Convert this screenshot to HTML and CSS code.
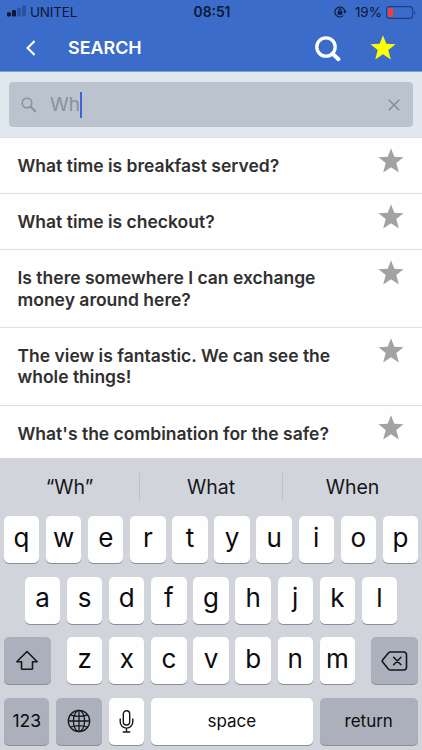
FILE: index.html
```html
<!DOCTYPE html>
<html lang="en">
<head>
<meta charset="utf-8">
<meta name="viewport" content="width=device-width, initial-scale=1">
<title>Search</title>
<link rel="stylesheet" href="styles.css">
</head>
<body>
<svg width="0" height="0" class="defs">
	<symbol id="star" viewBox="0 0 26 25"><path d="M13 .3l3.3 8.4 9.2.5-7.2 5.8 2.5 9.4L13 19.3l-7.8 5.1L7.700 15 .5 9.200l9.200-.5z"/></symbol>
</svg>
<div class="phone">
	<header class="header">
		<div class="status">
			<div class="status-left">
				<svg class="signal" width="19" height="12" viewBox="0 0 19 12">
					<rect x="0" y="7.200" width="4" height="4.300" rx="1"/>
					<rect x="5" y="5" width="4" height="6.500" rx="1"/>
					<rect x="10" y="2.800" width="4" height="8.700" rx="1" opacity=".3"/>
					<rect x="15" y=".6" width="4" height="10.900" rx="1" opacity=".3"/>
				</svg>
				<span class="carrier">UNITEL</span>
			</div>
			<div class="clock">08:51</div>
			<div class="status-right">
				<svg class="lock" width="13" height="12" viewBox="0 0 13 12" fill="none" stroke="#0b1838" stroke-width="1.100">
					<path d="M10.900 5.500A5 5 0 1 0 9.300 9.700"/>
					<path d="M9 5h3.800l-1.900 2.500z" fill="#0b1838" stroke="none"/>
					<rect x="3.700" y="5.300" width="4.600" height="3.400" fill="#0b1838" stroke="none"/>
					<path d="M4.700 5.500V4.200a1.300 1.300 0 0 1 2.600 0v1.300"/>
				</svg>
				<span class="percent">19%</span>
				<svg class="battery" width="30" height="13" viewBox="0 0 30 13">
					<rect x=".6" y=".6" width="26" height="11.800" rx="3" fill="none" stroke="#1f3f84" stroke-width="1.100"/>
					<rect x="2" y="2.200" width="5" height="8.600" rx="1" fill="#fb3b36"/>
					<path d="M28 4.300c1.700.7 1.700 3.700 0 4.400z" fill="#1f3f84"/>
				</svg>
			</div>
		</div>
		<div class="nav">
			<svg class="back" width="10" height="16" viewBox="0 0 10 16"><path d="M8.600 1L1.600 8l7 7" fill="none" stroke="#fff" stroke-width="2.100"/></svg>
			<h1 class="title">SEARCH</h1>
			<svg class="find" width="26" height="26" viewBox="0 0 26 26" fill="none" stroke="#fff"><circle cx="11" cy="11" r="9.200" stroke-width="3.300"/><path d="M17.600 17.600l5.800 5.600" stroke-width="4" stroke-linecap="round"/></svg>
			<svg class="fav" width="26" height="25"><use href="#star"/></svg>
		</div>
	</header>

	<div class="search">
		<div class="search-box">
			<svg class="glass" width="16" height="16" viewBox="0 0 16 16" fill="none" stroke="#89919b"><circle cx="6" cy="6" r="4.800" stroke-width="1.600"/><path d="M9.600 9.600l5.100 5.100" stroke-width="2"/></svg>
			<span class="query">Wh</span><span class="caret"></span>
			<svg class="clear" width="12" height="12" viewBox="0 0 12 12"><path d="M.7.7l10.600 10.600M11.300.7L.7 11.300" stroke="#858d97" stroke-width="1.500"/></svg>
		</div>
	</div>

	<ul class="list">
		<li class="item"><p>What time is breakfast served?</p><svg class="star" width="26" height="25"><use href="#star"/></svg></li>
		<li class="item"><p>What time is checkout?</p><svg class="star" width="26" height="25"><use href="#star"/></svg></li>
		<li class="item"><p>Is there somewhere I can exchange<br>money around here?</p><svg class="star" width="26" height="25"><use href="#star"/></svg></li>
		<li class="item"><p>The view is fantastic. We can see the<br>whole things!</p><svg class="star" width="26" height="25"><use href="#star"/></svg></li>
		<li class="item"><p>What's the combination for the safe?</p><svg class="star" width="26" height="25"><use href="#star"/></svg></li>
	</ul>

	<div class="keyboard">
		<div class="suggest">
			<span class="word">“Wh”</span>
			<span class="word">What</span>
			<span class="word">When</span>
		</div>
		<div class="keys">
			<div class="row">
				<b class="key">q</b><b class="key">w</b><b class="key">e</b><b class="key">r</b><b class="key">t</b><b class="key">y</b><b class="key">u</b><b class="key">i</b><b class="key">o</b><b class="key">p</b>
			</div>
			<div class="row">
				<b class="key">a</b><b class="key">s</b><b class="key">d</b><b class="key">f</b><b class="key">g</b><b class="key">h</b><b class="key">j</b><b class="key">k</b><b class="key">l</b>
			</div>
			<div class="row row-third">
				<b class="key dark shift"><svg width="24" height="21" viewBox="0 0 24 21"><path d="M12 1.500L1.800 11.700h4.700v6.800q0 .8.800.8h9.400q.8 0 .8-.8v-6.800h4.700z" fill="none" stroke="#15171b" stroke-width="1.600" stroke-linejoin="round"/></svg></b>
				<div class="row">
					<b class="key">z</b><b class="key">x</b><b class="key">c</b><b class="key">v</b><b class="key">b</b><b class="key">n</b><b class="key">m</b>
				</div>
				<b class="key dark shift"><svg width="27" height="20" viewBox="0 0 27 20" fill="none" stroke="#15171b" stroke-width="1.600" stroke-linejoin="round" stroke-linecap="round"><path d="M9.300 1h13.200q3 0 3 3v12q0 3-3 3H9.300q-1 0-1.700-.8L1.600 11q-.8-1 0-2l6-7.200Q8.300 1 9.300 1z"/><path d="M12.700 6.300l7.200 7.400M19.900 6.300l-7.200 7.400"/></svg></b>
			</div>
			<div class="row">
				<b class="key dark small num">123</b>
				<b class="key dark globe"><svg width="24" height="24" viewBox="0 0 24 24" fill="none" stroke="#15171b" stroke-width="1.300"><circle cx="12" cy="12" r="10.700"/><ellipse cx="12" cy="12" rx="5.600" ry="10.700"/><path d="M12 1.300v21.400M1.300 12h21.400M3.300 5.900q8.700 3 17.400 0M3.300 18.100q8.700-3 17.400 0"/></svg></b>
				<b class="key mic"><svg width="15" height="23" viewBox="0 0 15 23" fill="none" stroke="#15171b" stroke-width="1.400"><rect x="4.300" y=".8" width="6.400" height="14.200" rx="3.200"/><path d="M1.200 8.500v3.300a6.300 6.300 0 0 0 12.600 0V8.500M7.500 18v4M3.700 22h7.600"/></svg></b>
				<b class="key small space">space</b>
				<b class="key dark small return">return</b>
			</div>
		</div>
	</div>
</div>
</body>
</html>
```

FILE: styles.css
```css
*{box-sizing:border-box;}
body{margin:0;padding:0;background:#fefefe;font-family:Inter,"Liberation Sans",sans-serif;}
svg{display:block;flex:none;}
.defs{display:none;}
.phone{width:422px;height:750px;overflow:hidden;display:flex;flex-direction:column;}

.header{height:72px;background:#3c6cc9;border-bottom:1px solid #7f9fda;flex:none;}
.status{height:24px;display:grid;grid-template-columns:1fr auto 1fr;align-items:center;color:#0b1838;font-size:13.5px;line-height:24px;}
.status-left{display:flex;padding-left:7px;}
.signal{margin:5px 4px 0 0;fill:#0b1838;}
.carrier{letter-spacing:-.2px;}
.clock{padding-left:2px;font-weight:600;font-size:13.800px;}
.status-right{display:flex;align-items:center;justify-content:flex-end;padding-right:6px;}
.lock{margin-right:8px;}
.percent{margin-right:4px;}
.nav{height:47px;display:flex;align-items:center;padding:0 26px;}
.back{margin-top:1px;}
.title{margin:0 auto 0 32px;font-size:17.900px;font-weight:600;line-height:24px;color:#fff;}
.find{margin:2px 29px 0 0;}
.fav{margin-top:-1px;fill:#ff0;}

.search{height:65px;padding:10px 9px;background:#e1e8f0;flex:none;}
.search-box{height:45px;display:flex;align-items:center;padding:0 13px 0 12px;background:#bbc3cf;border-radius:4px;}
.query{margin-left:13px;font-size:19px;color:#89919c;}
.caret{width:2px;height:26px;background:#4263d8;}
.clear{margin-left:auto;}

.list{margin:0;padding:0;list-style:none;height:321px;overflow:hidden;flex:none;}
.item{display:flex;justify-content:space-between;align-items:flex-start;padding:17px 18px 16.800px 17.500px;border-top:1px solid #dedede;color:#303030;}
.item p{margin:0;font-size:17.500px;font-weight:600;line-height:21.400px;white-space:nowrap;}
.star{margin:-7.300px 0 -10px;fill:#a2a2a2;}

.keyboard{flex:1;background:#d1d4db;}
.suggest{height:58px;display:grid;grid-template-columns:139px 143px 140px;align-items:center;}
.word{height:28px;line-height:28px;text-align:center;font-size:19.500px;color:#15171b;}
.word + .word{border-left:1px solid #bfc2ca;}
.keys{display:flex;flex-direction:column;gap:13.600px;padding:0 3.800px;}
.row{display:flex;justify-content:center;gap:6.800px;}
.row-third{justify-content:space-between;}
.key{width:35.300px;height:47px;display:flex;align-items:center;justify-content:center;padding-bottom:4px;border-radius:5px;background:#fefefe;box-shadow:0 1px 0 #8b8e94;color:#0c0c0e;font-size:26px;font-weight:400;line-height:32px;}
.dark{background:#abb0bc;}
.small{font-size:17px;font-weight:400;padding-bottom:1px;}
.shift{width:47px;padding-bottom:0;}
.num{width:45.300px;font-size:17.500px;}
.globe{width:45.700px;padding-bottom:0;}
.mic{padding-bottom:0;}
.space{width:162px;}
.return{width:98.300px;}
```
